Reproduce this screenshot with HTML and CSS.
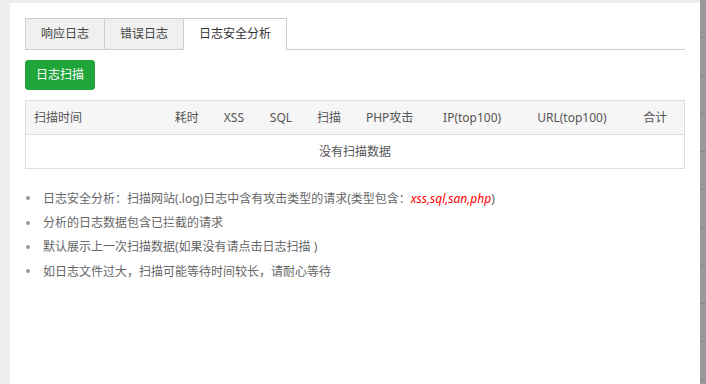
FILE: index.html
```html
<!DOCTYPE html>
<html lang="zh-CN">
<head>
<meta charset="utf-8">
<title>日志安全分析</title>
<link rel="stylesheet" href="styles.css">
</head>
<body>
<div class="page">
  <div class="side-left"></div>
  <div class="panel">
    <div class="tabs">
      <span class="tab">响应日志</span>
      <span class="tab">错误日志</span>
      <span class="tab active">日志安全分析</span>
    </div>
    <button class="btn-scan">日志扫描</button>
    <table class="scan-table">
      <colgroup>
        <col class="c-time"><col class="c-cost"><col class="c-xss"><col class="c-sql"><col class="c-scan"><col class="c-php"><col class="c-ip"><col class="c-url"><col class="c-total">
      </colgroup>
      <thead>
        <tr>
          <th>扫描时间</th><th>耗时</th><th>XSS</th><th>SQL</th><th>扫描</th><th>PHP攻击</th><th>IP(top100)</th><th>URL(top100)</th><th>合计</th>
        </tr>
      </thead>
      <tbody>
        <tr><td colspan="9" class="empty">没有扫描数据</td></tr>
      </tbody>
    </table>
    <ul class="help">
      <li>日志安全分析<span class="punc">：</span>扫描网站(.log)日志中含有攻击类型的请求(类型包含<span class="punc">：</span><span class="red">xss,sql,san,php</span>)</li>
      <li>分析的日志数据包含已拦截的请求</li>
      <li>默认展示上一次扫描数据(如果没有请点击日志扫描 )</li>
      <li>如日志文件过大<span class="punc">，</span>扫描可能等待时间较长<span class="punc">，</span>请耐心等待</li>
    </ul>
  </div>
  <div class="side-right"></div>
</div>
</body>
</html>
```

FILE: styles.css
```css
html, body {
  margin: 0;
  padding: 0;
  height: 100%;
}
body {
  background: #eeeeee;
  font-family: "Noto Sans", "Noto Sans CJK SC", sans-serif;
  font-size: 12px;
  color: #666;
}
.page {
  display: flex;
  height: 384px;
  overflow: hidden;
}
.side-left {
  width: 10px;
  background: #efefef;
}
.panel {
  width: 660px;
  margin-top: 3px;
  background: #fff;
  padding: 15px 15px 0 15px;
}
.side-right {
  width: 6px;
  margin-left: auto;
  background: repeating-linear-gradient(to bottom, #999 0, #999 37px, #888 37px, #888 38px);
}
.tabs {
  display: flex;
  border-bottom: 1px solid #ccccd6;
  height: 31px;
}
.tab {
  display: block;
  height: 30px;
  line-height: 30px;
  padding: 0 15px;
  border: 1px solid #ccccd6;
  border-bottom: none;
  background: #f0f0f0;
  color: #444;
  margin-left: -1px;
}
.tab:first-child {
  margin-left: 0;
}
.tab.active {
  background: #fff;
  height: 31px;
  color: #333;
}
.btn-scan {
  display: block;
  margin-top: 10px;
  height: 30px;
  padding: 0 10px;
  background: #20a53a;
  border: 1px solid #20a53a;
  border-radius: 3px;
  color: #fff;
  font-family: inherit;
  font-size: 12px;
  line-height: 28px;
}
.scan-table {
  margin-top: 10px;
  width: 660px;
  border-collapse: collapse;
  table-layout: fixed;
  border: 1px solid #ddd;
}
.c-time { width: 141px; }
.c-cost { width: 49px; }
.c-xss { width: 46px; }
.c-sql { width: 47px; }
.c-scan { width: 49px; }
.c-php { width: 77px; }
.c-ip { width: 94px; }
.c-url { width: 106px; }
.c-total { width: 49px; }
.scan-table th {
  background: #f6f6f6;
  font-weight: normal;
  text-align: left;
  color: #555;
  padding: 8px;
  line-height: 17px;
  border-bottom: 1px solid #ddd;
  white-space: nowrap;
}
.scan-table td {
  padding: 8px;
  line-height: 17px;
}
.scan-table td.empty {
  text-align: center;
  color: #555;
}
.help {
  list-style: none;
  margin: 17px 0 0 0;
  padding: 0;
}
.help li {
  position: relative;
  padding-left: 18px;
  line-height: 24px;
  color: #666;
}
.help li::before {
  content: "";
  position: absolute;
  left: 1px;
  top: 10px;
  width: 4px;
  height: 4px;
  border-radius: 50%;
  background: #999;
}
.punc {
  font-family: "Noto Sans CJK TC", sans-serif;
}
.red {
  color: #ff0000;
  font-style: italic;
}
```
